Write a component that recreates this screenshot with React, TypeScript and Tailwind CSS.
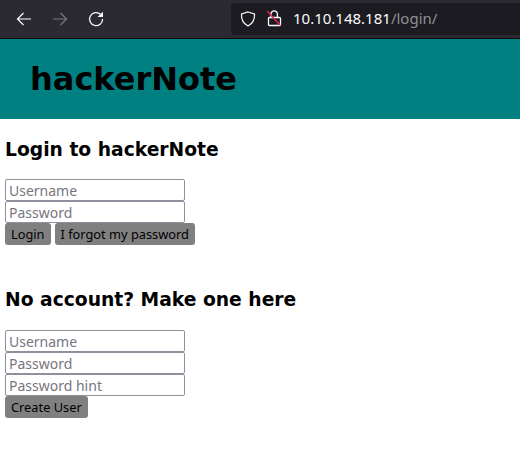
import React from 'react';

const uiFont = "font-['Noto_Sans',sans-serif]";
const inputClass = `block w-[180px] h-[22px] rounded-[2px] border border-[#8f8f9d] bg-white px-[3px] text-[14px] leading-[18px] text-black placeholder:text-[#77757f] outline-none ${uiFont}`;
const buttonClass = `h-[22px] rounded-[3px] bg-[#808080] px-[6px] text-[12.8px] leading-[20px] text-black ${uiFont}`;

const Toolbar = () => (
  <div className="flex h-[39px] items-center border-b border-[#0c0c0d] bg-[#2b2a33] pl-[16px]">
    <svg width="16" height="16" viewBox="0 0 16 16" fill="none" stroke="#fbfbfe" strokeWidth="1.2" className="mr-[20px]">
      <path d="M15 8H1.800M7.500 2 1.500 8l6 6" />
    </svg>
    <svg width="16" height="16" viewBox="0 0 16 16" fill="none" stroke="#77767d" strokeWidth="1.2" className="mr-[20px]">
      <path d="M1 8h13.200M8.500 2l6 6-6 6" />
    </svg>
    <svg width="16" height="16" viewBox="0 0 16 16" fill="none" stroke="#fbfbfe" strokeWidth="1.300">
      <path d="M12.500 3.300A6.500 6.500 0 1 0 14.600 8" />
      <path d="M9.500 6h5.500V.8z" fill="#fbfbfe" stroke="none" />
    </svg>
    <div className="ml-[127px] mb-[1px] flex h-[32px] flex-1 items-center rounded-l-[4px] bg-[#1c1b22] pl-[9px]">
      <svg width="16" height="16" viewBox="0 0 16 16" fill="none" stroke="#fbfbfe" strokeWidth="1.200" className="mr-[11px]">
        <path d="M8 1 14.500 3c.3 5.500-1.500 9.500-6.500 12C3 12.500 1.200 8.500 1.500 3z" />
      </svg>
      <svg width="15" height="18" viewBox="0 0 15 18" fill="none" className="mr-[11px] mb-[2px]">
        <path d="M4 8V5a3.200 3.200 0 0 1 6.400 0v3" stroke="#fbfbfe" strokeWidth="1.300" />
        <rect x="1.500" y="8.500" width="12" height="8" rx="1" stroke="#fbfbfe" strokeWidth="1.300" />
        <path d="M0 2 13 16" stroke="#e22850" strokeWidth="1.500" />
      </svg>
      <span className={`text-[15px] text-[#fbfbfe] ${uiFont}`}>
        10.10.148.181<span className="text-[#8f8f94]">/login/</span>
      </span>
    </div>
  </div>
);

export default function App() {
  return (
    <div className="h-[470px] w-[520px] overflow-hidden bg-white font-['DejaVu_Sans',sans-serif] text-black">
      <Toolbar />
      <div className="flex h-[80px] items-center bg-[#008080] pl-[30px]">
        <h1 className="text-[32px] font-bold leading-none">hackerNote</h1>
      </div>
      <div className="px-[5px]">
        <h2 className="pt-[19px] text-[18.72px] font-bold leading-[23px]">Login to hackerNote</h2>
        <form className="mt-[18px]">
          <input className={inputClass} placeholder="Username" />
          <input className={inputClass} placeholder="Password" />
          <div className="flex gap-[4px]">
            <button type="button" className={buttonClass}>Login</button>
            <button type="button" className={buttonClass}>I forgot my password</button>
          </div>
        </form>
        <h2 className="mt-[43px] text-[18.72px] font-bold leading-[23px]">No account? Make one here</h2>
        <form className="mt-[19px]">
          <input className={inputClass} placeholder="Username" />
          <input className={inputClass} placeholder="Password" />
          <input className={inputClass} placeholder="Password hint" />
          <div className="flex">
            <button type="button" className={buttonClass}>Create User</button>
          </div>
        </form>
      </div>
    </div>
  );
}
